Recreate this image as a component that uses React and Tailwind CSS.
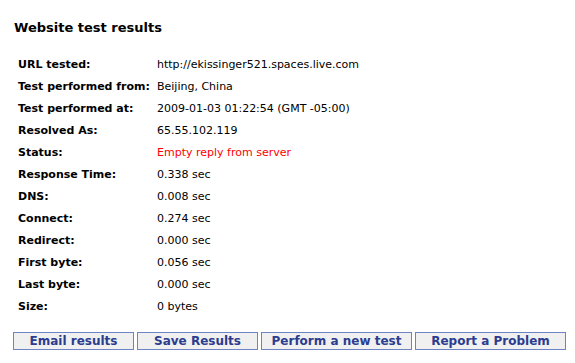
export default function App() {
  const rows = [
    ["URL tested:", "http://ekissinger521.spaces.live.com"],
    ["Test performed from:", "Beijing, China"],
    ["Test performed at:", "2009-01-03 01:22:54 (GMT -05:00)"],
    ["Resolved As:", "65.55.102.119"],
    ["Status:", "Empty reply from server", true],
    ["Response Time:", "0.338 sec"],
    ["DNS:", "0.008 sec"],
    ["Connect:", "0.274 sec"],
    ["Redirect:", "0.000 sec"],
    ["First byte:", "0.056 sec"],
    ["Last byte:", "0.000 sec"],
    ["Size:", "0 bytes"],
  ];
  const buttons = [
    ["Email results", "w-[121px]"],
    ["Save Results", "w-[121px]"],
    ["Perform a new test", "w-[151px]"],
    ["Report a Problem", "w-[151px]"],
  ];

  return (
    <div className="w-[575px] h-[363px] bg-white text-black font-['DejaVu_Sans',Verdana,sans-serif] pt-[18px] pl-[14px]">
      <h1 className="text-[13px] font-bold leading-[20px]">Website test results</h1>
      <div className="mt-[16px] pl-[4px]">
        {rows.map(([label, value, red]) => (
          <div key={label} className="flex h-[22px] items-center text-[11px]">
            <div className="w-[139px] font-bold">{label}</div>
            <div className={red ? "text-[#ff0000]" : ""}>{value}</div>
          </div>
        ))}
      </div>
      <div className="mt-[14px] flex gap-[3px] -ml-[1px]">
        {buttons.map(([text, w]) => (
          <button
            key={text}
            className={`${w} h-[18px] border border-[#6e83c4] bg-[#f0f0f0] text-[#2c3d8f] text-[12px] font-bold leading-none`}
          >
            {text}
          </button>
        ))}
      </div>
    </div>
  );
}
